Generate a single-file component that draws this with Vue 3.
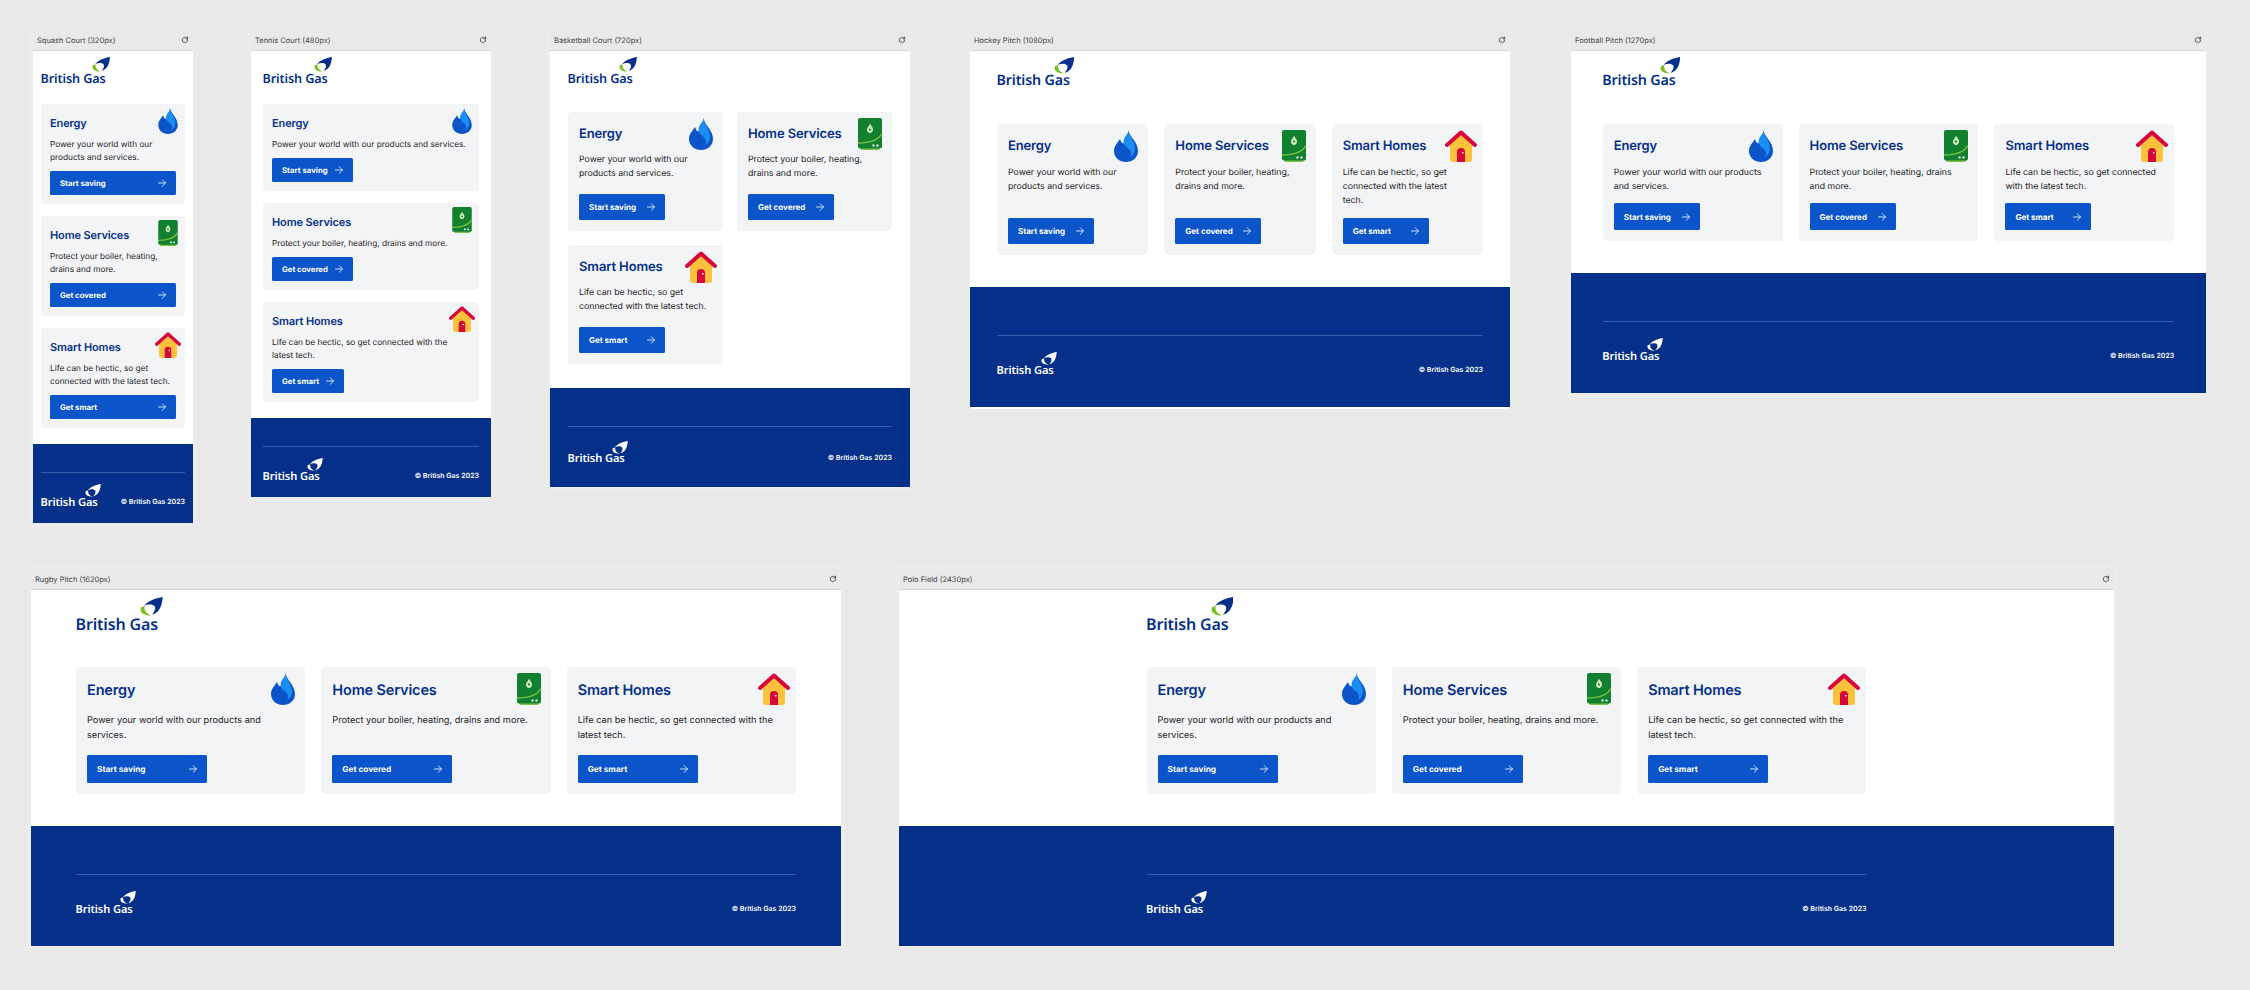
<template>
    <div class="page">
        <div v-for="(row, i) in rows" :key="i" :class="['row', `row-${i + 1}`]">
            <section v-for="frame in row" :key="frame.width" :class="['frame', `bp-${frame.width}`]">
                <header class="frame-bar">
                    <span>{{ frame.name }} ({{ frame.width }}px)</span>
                    <svg viewBox="0 0 24 24" width="8" height="8" fill="none" stroke="#555" stroke-width="3"
                        stroke-linecap="round" stroke-linejoin="round">
                        <path d="M20 12a8 8 0 1 1-2.4-5.7L20 8.5" />
                        <path d="M20 3v5.500h-5.500" />
                    </svg>
                </header>
                <div class="viewport" :style="{ width: frame.width + 'px' }">
                    <div class="wrap top">
                        <a class="logo">
                            <svg class="leaf" viewBox="0 0 68 57">
                                <path fill="#05308a"
                                    d="M68 0C50 3 25 10 12 27C24 21 38 21 44 28C48 35 44 43 36 53C56 48 66 30 68 0Z" />
                                <path fill="#78be20" d="M3 31C-2 45 10 56 34 55C22 51 11 42 14 27Z" />
                            </svg>
                            <span>British Gas</span>
                        </a>
                    </div>
                    <main class="wrap cards">
                        <article v-for="card in cards" :key="card.title" class="card">
                            <svg v-if="card.icon === 'flame'" class="icon" viewBox="0 0 64 64">
                                <path fill="#0b54c9"
                                    d="M37 0C38 13 56 24 56 42C56 55 45 64 32 64C19 64 8 55 8 42C8 31 16 25 20 18C22 25 25 28 28 26C33 20 37 10 37 0Z" />
                                <path fill="#1a8df2"
                                    d="M37 1C38 12 50 23 50 37C50 45 46 51 40 55C44 47 42 41 36 37C28 31 24 24 30 14C33 9 37 6 37 1Z" />
                            </svg>
                            <svg v-else-if="card.icon === 'boiler'" class="icon" viewBox="0 0 64 64">
                                <path fill="#7ac143" d="M12 56H52V60Q52 64 48 64H16Q12 64 12 60Z" />
                                <rect x="8" y="0" width="48" height="61" rx="4" fill="#11812f" />
                                <path d="M8 50C28 50 48 46 56 31" fill="none" stroke="#7ac143" stroke-width="3" />
                                <path fill="#d9f0c0" d="M32 11C33 15 38 18 38 23C38 27 35 30 32 30C29 30 26 27 26 23C26 19 31 16 32 11Z" />
                                <path fill="#11812f" d="M33 17L29 24H32L31 28L35 22H32Z" />
                                <rect x="37" y="53" width="4" height="4" fill="#fff" />
                                <rect x="45" y="53" width="4" height="4" fill="#fff" />
                            </svg>
                            <svg v-else class="icon" viewBox="0 0 64 64">
                                <path fill="#fdc13c" d="M32 8L54 28V58Q54 64 48 64H16Q10 64 10 58V28Z" />
                                <path d="M4 30L32 5L60 30" fill="none" stroke="#d6083b" stroke-width="8"
                                    stroke-linecap="round" stroke-linejoin="round" />
                                <path fill="#d6083b" d="M24 64V44Q24 36 32 36Q40 36 40 44V64Z" />
                                <rect x="34" y="44" width="3" height="3" fill="#fff" />
                            </svg>
                            <h2>{{ card.title }}</h2>
                            <p>{{ card.text }}</p>
                            <a class="btn">
                                <span>{{ card.action }}</span>
                                <svg viewBox="0 0 16 16" width="16" height="16" fill="none" stroke="#fff"
                                    stroke-width="1.6" stroke-linecap="round" stroke-linejoin="round">
                                    <path d="M1 8H15" />
                                    <path d="M8.500 1.500L15 8L8.500 14.500" />
                                </svg>
                            </a>
                        </article>
                    </main>
                    <footer class="foot">
                        <div class="wrap">
                            <div class="foot-inner">
                                <a class="logo logo-foot">
                                    <svg class="leaf" viewBox="0 0 68 57">
                                        <path fill="#fff"
                                            d="M68 0C50 3 25 10 12 27C24 21 38 21 44 28C48 35 44 43 36 53C56 48 66 30 68 0Z" />
                                        <path fill="#fff" d="M3 31C-2 45 10 56 34 55C22 51 11 42 14 27Z" />
                                    </svg>
                                    <span>British Gas</span>
                                </a>
                                <small>© British Gas 2023</small>
                            </div>
                        </div>
                    </footer>
                </div>
            </section>
        </div>
    </div>
</template>

<script setup>
const rows = [
    [
        { name: 'Squash Court', width: 320 },
        { name: 'Tennis Court', width: 480 },
        { name: 'Basketball Court', width: 720 },
        { name: 'Hockey Pitch', width: 1080 },
        { name: 'Football Pitch', width: 1270 }
    ],
    [
        { name: 'Rugby Pitch', width: 1620 },
        { name: 'Polo Field', width: 2430 }
    ]
]

const cards = [
    {
        title: 'Energy',
        text: 'Power your world with our products and services.',
        action: 'Start saving',
        icon: 'flame'
    },
    {
        title: 'Home Services',
        text: 'Protect your boiler, heating, drains and more.',
        action: 'Get covered',
        icon: 'boiler'
    },
    {
        title: 'Smart Homes',
        text: 'Life can be hectic, so get connected with the latest tech.',
        action: 'Get smart',
        icon: 'house'
    }
]
</script>

<style scoped>
.page {
    width: 2250px;
    height: 990px;
    overflow: hidden;
    font-family: Inter, "Liberation Sans", sans-serif;
    text-rendering: geometricPrecision;
}

.row {
    display: flex;
    align-items: flex-start;
}

.row-1 {
    padding: 30px 0 0 33px;
    height: 569px;
    box-sizing: border-box;
}

.bp-480 { margin-left: 58px; }
.bp-720 { margin-left: 59px; }
.bp-1080 { margin-left: 60px; }
.bp-1270 { margin-left: 61px; }
.row-2 { padding-left: 31px; }
.bp-2430 { margin-left: 58px; }

.frame {
    background: #e9e9e9;
    box-shadow: 0 0 0 4px #ebebeb;
}

.frame-bar {
    height: 20px;
    padding: 0 4px;
    display: flex;
    align-items: center;
    justify-content: space-between;
    border-bottom: 1px solid #d9d9d9;
    font-size: 7.500px;
    color: #444;
}

/* previews are drawn at half size */
.viewport {
    zoom: 0.5;
    background: #fff;
    --gap: 32px;
    --cols: repeat(3, 1fr);
    --logo: 28.500px;
    --top: 12px;
    --top-gap: 74px;
    --main-gap: 64px;
    --card-pad: 22px;
    --title: 26px;
    --title-h: 45px;
    --title-gap: 16px;
    --text: 17.500px;
    --text-h: 28px;
    --btn-gap: 21px;
    --btn-h: 52px;
    --btn-w: 172px;
    --btn-text: 16px;
    --icon: 64px;
    --icon-at: 12px;
    --foot-top: 96px;
    --foot-mid: 32px;
    --foot-end: 62px;
}

.bp-320 .viewport,
.bp-480 .viewport {
    --gap: 24px;
    --cols: 1fr;
    --logo: 25.300px;
    --top-gap: 38px;
    --main-gap: 32px;
    --card-pad: 18px;
    --title: 22px;
    --title-h: 40px;
    --title-gap: 11px;
    --text: 16.500px;
    --text-h: 26px;
    --btn-gap: 13px;
    --btn-h: 48px;
    --btn-w: 0;
    --btn-text: 15.500px;
    --icon: 52px;
    --icon-at: 8px;
    --foot-top: 57px;
    --foot-mid: 22px;
    --foot-end: 30px;
}

.bp-720 .viewport {
    --gap: 28px;
    --cols: 1fr 1fr;
    --logo: 25.300px;
    --top-gap: 54px;
    --main-gap: 48px;
    --btn-gap: 25px;
    --foot-top: 76px;
    --foot-mid: 28px;
    --foot-end: 46px;
}

.bp-1080 .viewport {
    padding-bottom: 4px;
}

/* hockey's third card runs to three lines */
.bp-1080 .card p {
    padding-right: 30px;
}

.bp-1270 .viewport {
    --btn-gap: 19px;
    --btn-h: 54px;
}

.bp-1620 .viewport,
.bp-2430 .viewport {
    --logo: 32px;
    --top: 14px;
    --top-gap: 71px;
    --title: 29px;
    --title-h: 50px;
    --title-gap: 20px;
    --text: 18.400px;
    --text-h: 30px;
    --btn-gap: 24px;
    --btn-h: 56px;
    --btn-w: 240px;
    --btn-text: 16.500px;
}

.wrap {
    max-width: 1440px;
    margin: 0 auto;
    padding-inline: 5%;
}

.bp-1620 .wrap {
    padding-inline: 90px;
}

.top {
    padding-top: var(--top);
    padding-bottom: var(--top-gap);
}

.logo {
    position: relative;
    display: inline-block;
    margin-left: -1px;
    font-family: "Noto Sans", "Open Sans", sans-serif;
    font-size: var(--logo);
    font-weight: 600;
    line-height: 0.9em;
    padding-top: 1.230em;
    letter-spacing: -0.01em;
    color: #05308a;
}

.logo span {
    display: block;
}

.leaf {
    position: absolute;
    top: 0;
    right: -0.310em;
    width: 1.420em;
    height: 1.190em;
}

.logo-foot {
    font-size: 22.200px;
    color: #fff;
}

.cards {
    display: grid;
    grid-template-columns: var(--cols);
    gap: var(--gap);
    padding-bottom: var(--main-gap);
}

.card {
    position: relative;
    display: flex;
    flex-direction: column;
    align-items: flex-start;
    padding: var(--card-pad);
    background: #f3f4f6;
    border-radius: 8px;
}

.icon {
    position: absolute;
    top: var(--icon-at);
    right: var(--icon-at);
    width: var(--icon);
    height: var(--icon);
}

.card h2 {
    margin: 0 0 var(--title-gap);
    font-size: var(--title);
    line-height: var(--title-h);
    font-weight: 600;
    letter-spacing: -0.01em;
    color: #05308a;
}

.card p {
    margin: 0 0 var(--btn-gap);
    font-size: var(--text);
    line-height: var(--text-h);
    color: #222;
}

.btn {
    display: inline-flex;
    align-items: center;
    justify-content: space-between;
    gap: 14px;
    box-sizing: border-box;
    min-width: var(--btn-w);
    height: var(--btn-h);
    margin-top: auto;
    padding: 0 20px;
    background: #0b54c9;
    border-radius: 3px;
    font-size: var(--btn-text);
    font-weight: 700;
    color: #fff;
}

.bp-320 .btn {
    width: 100%;
}

.foot {
    background: #05308a;
    color: #fff;
}

.foot-inner {
    display: flex;
    align-items: flex-end;
    justify-content: space-between;
    margin-top: var(--foot-top);
    padding: var(--foot-mid) 0 var(--foot-end);
    border-top: 2px solid #3c5ca9;
}

.foot .wrap {
    overflow: hidden;
}

.foot small {
    font-size: 14px;
    font-weight: 600;
    line-height: 24px;
}
</style>

<style>
html,
body {
    background: #e9e9e9;
}
</style>
